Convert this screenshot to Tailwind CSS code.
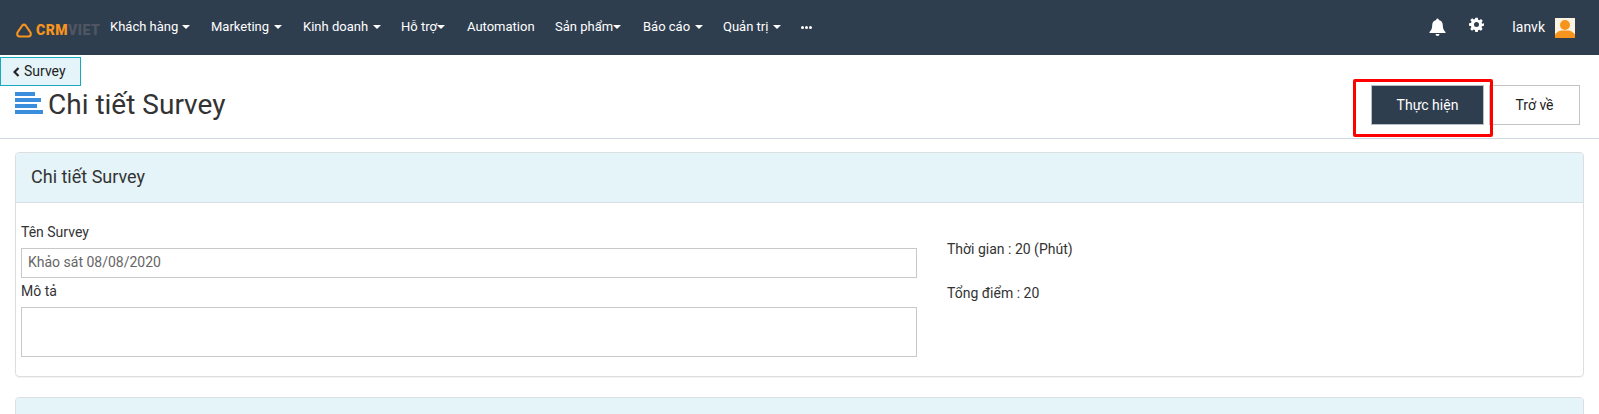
<!DOCTYPE html>
<html lang="en">
<head>
    <meta charset="UTF-8">
    <title>Chi tiết Survey</title>
    <script src="https://cdn.jsdelivr.net/npm/@tailwindcss/browser@4"></script>
</head>
<body class="bg-white h-[414px] overflow-hidden relative font-['Roboto',sans-serif] text-[#333]">
    <nav class="h-[55px] bg-[#2f3e4f] flex items-center text-white text-[13px]">
        <div class="w-[110px] pl-[15px] flex items-center gap-[3px] pt-[6px] shrink-0">
            <svg width="18" height="15" viewBox="0 0 18 15" fill="none" stroke="#f7941d" stroke-width="2.2" stroke-linejoin="round"><path d="M7.300 2.500Q9 .8 10.700 2.500L15.500 9.500Q16.800 13.500 13 13.500H5Q1.200 13.500 2.500 9.500Z"/></svg>
            <span class="font-black text-[14px] tracking-[0.5px] text-[#f7941d]">CRM<span class="text-[#4f5661]">VIET</span></span>
        </div>
        <div class="flex items-center pb-[1px]">
            <a class="flex items-center w-[101px]">Khách hàng<i class="ml-[4px] border-x-[4px] border-t-[4px] border-x-transparent border-t-white"></i></a>
            <a class="flex items-center w-[92px]">Marketing<i class="ml-[5px] border-x-[4px] border-t-[4px] border-x-transparent border-t-white"></i></a>
            <a class="flex items-center w-[98px]">Kinh doanh<i class="ml-[5px] border-x-[4px] border-t-[4px] border-x-transparent border-t-white"></i></a>
            <a class="flex items-center w-[66px]">Hỗ trợ<i class="border-x-[4px] border-t-[4px] border-x-transparent border-t-white"></i></a>
            <a class="flex items-center w-[88px]">Automation</a>
            <a class="flex items-center w-[88px]">Sản phẩm<i class="border-x-[4px] border-t-[4px] border-x-transparent border-t-white"></i></a>
            <a class="flex items-center w-[80px]">Báo cáo<i class="ml-[5px] border-x-[4px] border-t-[4px] border-x-transparent border-t-white"></i></a>
            <a class="flex items-center w-[78px]">Quản trị<i class="ml-[5px] border-x-[4px] border-t-[4px] border-x-transparent border-t-white"></i></a>
            <a class="flex items-center gap-[1px]"><i class="size-[3px] rounded-full bg-white"></i><i class="size-[3px] rounded-full bg-white"></i><i class="size-[3px] rounded-full bg-white"></i></a>
        </div>
        <div class="ml-auto flex items-center pr-[24px]">
            <svg class="mt-[-1px]" width="17" height="18" viewBox="0 0 17 18" fill="#fff"><path d="M8.5 0.5a1.3 1.3 0 0 1 1.3 1.5c2.7.5 4 2.7 4 5.3 0 3.5 1 5 2.7 6.7v1H.5v-1c1.700-1.700 2.700-3.200 2.700-6.700 0-2.600 1.300-4.800 4-5.300a1.300 1.300 0 0 1 1.300-1.500zM6.500 16h4a2 2 0 0 1-4 0z"/></svg>
            <svg class="ml-[23px] mt-[-7px]" width="15" height="15" viewBox="0 0 24 24" fill="#fff"><path fill-rule="evenodd" d="M10 1h4l.6 3.200 1.900.8 2.700-1.800 2.800 2.800-1.800 2.700.8 1.900L24 10v4l-3.200.6-.8 1.900 1.800 2.700-2.800 2.800-2.700-1.800-1.900.8L14 24h-4l-.6-3.200-1.900-.8-2.700 1.800L2 19l1.800-2.700-.8-1.900L0 14v-4l3.200-.6.8-1.900L2.200 4.800 5 2l2.700 1.800 1.900-.8zM12 8a4 4 0 1 0 0 8 4 4 0 0 0 0-8z"/></svg>
            <span class="ml-[28px] text-[14px]">lanvk</span>
            <svg class="ml-[10px]" width="20" height="20" viewBox="0 0 20 20"><rect width="20" height="20" fill="#fdf3e3"/><circle cx="10" cy="7" r="5" fill="#f7941d"/><path d="M0 20v-3q1-3 6-4.500h8q5 1.500 6 4.500v3z" fill="#f7941d"/></svg>
        </div>
    </nav>

    <div class="h-[84px] border-b border-[#cdd6df] relative">
        <a class="absolute left-0 top-[2px] w-[81px] h-[29px] bg-[#e4f4f8] border border-[#17a8c4] flex items-center pl-[12px] gap-[4px] text-[14px] text-[#222]">
            <svg width="7" height="10" viewBox="0 0 7 10" fill="none" stroke="#222" stroke-width="2.2"><path d="M5.500 1 1.500 5l4 4"/></svg>Survey
        </a>
        <div class="flex items-start justify-between pl-[15px] pr-[19px] pt-[30px]">
            <h1 class="flex items-center gap-[5px] text-[28px] leading-[40px] font-normal text-[#333]">
                <svg class="mt-[-3px]" width="28" height="23" viewBox="0 0 28 23" fill="#3b8ede"><rect width="20" height="4"/><rect y="6" width="26" height="4"/><rect y="12" width="22" height="4"/><rect y="18" width="28" height="4"/></svg>
                Chi tiết Survey
            </h1>
            <div class="flex gap-[5px]">
                <button class="w-[113px] h-[40px] bg-[#2f3e4f] border border-[#b8bfc6] text-white text-[14px]">Thực hiện</button>
                <button class="w-[91px] h-[40px] bg-white border border-[#c4c4c4] text-[#222] text-[14px]">Trở về</button>
            </div>
        </div>
    </div>

    <main class="px-[15px] pt-[13px] flex flex-col gap-[20px]">
        <section class="border border-[#dcdfe1] rounded-[4px] h-[225px] shadow-[0_1px_1px_rgba(0,0,0,0.05)]">
            <h2 class="h-[50px] pb-[2px] bg-[#e4f4f8] border-b border-[#d8dfe2] rounded-t-[4px] flex items-center pl-[15px] text-[18px] font-normal text-[#333]">Chi tiết Survey</h2>
            <div class="grid grid-cols-[896px_1fr] gap-[30px] pl-[5px] pt-[19px] text-[14px] text-[#333]">
                <div>
                    <label class="block leading-[20px] mb-[6px]">Tên Survey</label>
                    <div class="h-[30px] pb-[1px] border border-[#c8c8c8] flex items-center pl-[6px] text-[#666]">Khảo sát 08/08/2020</div>
                    <label class="block leading-[20px] mt-[3px] mb-[6px]">Mô tả</label>
                    <div class="h-[50px] border border-[#c8c8c8]"></div>
                </div>
                <div class="pt-[17px] flex flex-col gap-[24px]">
                    <p class="leading-[20px]">Thời gian : 20 (Phút)</p>
                    <p class="leading-[20px]">Tổng điểm : 20</p>
                </div>
            </div>
        </section>
        <section class="border border-[#dcdfe1] rounded-[4px]">
            <div class="h-[50px] bg-[#e4f4f8] rounded-t-[4px]"></div>
        </section>
    </main>

    <div class="absolute left-[1353px] top-[79px] w-[140px] h-[58px] border-[3px] border-[#ff0000] rounded-[2px]"></div>
</body>
</html>
